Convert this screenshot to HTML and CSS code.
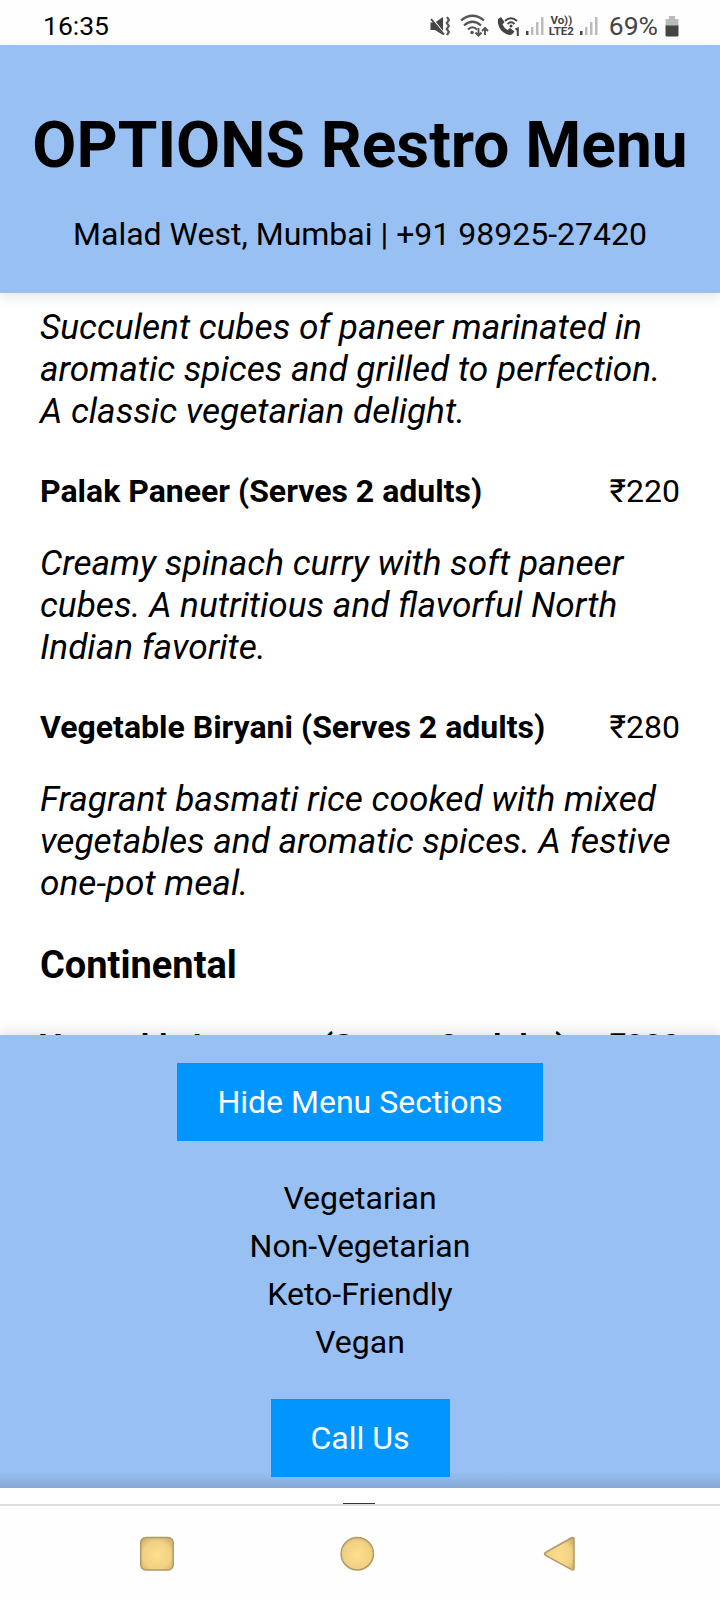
FILE: index.html
```html
<!DOCTYPE html>
<html lang="en">
<head>
    <meta charset="UTF-8">
    <meta name="viewport" content="width=device-width, initial-scale=1.0">
    <title>OPTIONS Restro Menu</title>
    <link rel="stylesheet" href="styles.css">
</head>
<body>
    <div class="status">
        <span class="time">16:35</span>
        <div class="status-icons">
            <svg class="mute" width="20" height="20" viewBox="0 0 20 20">
                <path d="M0.500 6.500h4.500L13 1v18l-8-5H.5z" fill="#444"/>
                <path d="M0 0l14 18" stroke="#fefefe" stroke-width="2.200"/>
                <path d="M1 3l13 15.500" stroke="#444" stroke-width="1.800"/>
                <path d="M17 1l1.800 3-2 3 2 3-2 3 2 3-1.800 3" fill="none" stroke="#555" stroke-width="2.200"/>
            </svg>
            <svg class="wifi" width="29" height="24" viewBox="0 0 29 24">
                <g fill="none" stroke="#555" stroke-width="2.200">
                    <path d="M1 6.500Q12.500-3 24 6.500"/>
                    <path d="M4 11.500Q12.500 4 21 11.500"/>
                    <path d="M8 15.500Q12.500 11 17 15.500"/>
                </g>
                <circle cx="12" cy="18.500" r="1.800" fill="#555"/>
                <path d="M18.500 14v7M15.500 18.500l3 3.200 3-3.200M25 21v-7M22 17l3-3.200 3 3.200" fill="none" stroke="#555" stroke-width="1.900"/>
            </svg>
            <svg class="call" width="23" height="22" viewBox="0 0 23 22">
                <path d="M1 3l3-2 3.500 5-2 2.500q1.500 3.500 5 5.500l2.500-2 4.500 3.500-2.500 3q-4 1.500-9-2.500-6-5-5-13z" fill="#444"/>
                <path d="M8 5Q14-.5 20 5M10.500 8Q14 4.500 17.500 8" fill="none" stroke="#444" stroke-width="1.900"/>
                <circle cx="14" cy="10" r="1.500" fill="#444"/>
                <path d="M18.500 13.500l2.300-1V20" fill="none" stroke="#444" stroke-width="2"/>
            </svg>
            <svg class="signal" width="18" height="20" viewBox="0 0 18 20">
                <path d="M0 15h2.500v4H0z" fill="#444"/>
                <path d="M5 11h2.500v8H5zM10 6h2.500v13H10zM15 1h2.500v18H15z" fill="#bbb"/>
            </svg>
            <div class="volte"><span>Vo))</span><span>LTE2</span></div>
            <svg class="signal2" width="18" height="20" viewBox="0 0 18 20">
                <path d="M0 15h2.500v4H0z" fill="#444"/>
                <path d="M5 11h2.500v8H5zM10 6h2.500v13H10zM15 1h2.500v18H15z" fill="#bbb"/>
            </svg>
            <span class="percent">69%</span>
            <svg class="battery" width="14" height="21" viewBox="0 0 14 21">
                <path d="M4 0h6v3h2.500q1 0 1 1v6H.5V4q0-1 1-1H4z" fill="#bbb"/>
                <path d="M.5 9.500h13v10q0 1-1 1h-11q-1 0-1-1z" fill="#444"/>
            </svg>
        </div>
    </div>

    <header class="header">
        <h1>OPTIONS Restro Menu</h1>
        <p>Malad West, Mumbai | +91 98925-27420</p>
    </header>

    <main class="menu">
        <p class="description">Succulent cubes of paneer marinated in<br>aromatic spices and grilled to perfection.<br>A classic vegetarian delight.</p>
        <div class="item">
            <span class="name">Palak Paneer (Serves 2 adults)</span>
            <span class="price">₹220</span>
        </div>
        <p class="description">Creamy spinach curry with soft paneer<br>cubes. A nutritious and flavorful North<br>Indian favorite.</p>
        <div class="item">
            <span class="name">Vegetable Biryani (Serves 2 adults)</span>
            <span class="price">₹280</span>
        </div>
        <p class="description">Fragrant basmati rice cooked with mixed<br>vegetables and aromatic spices. A festive<br>one-pot meal.</p>
        <h3>Continental</h3>
        <div class="item">
            <span class="name">Vegetable Lasagna (Serves 2 adults)</span>
            <span class="price">₹320</span>
        </div>
    </main>

    <footer class="footer">
        <button class="btn">Hide Menu Sections</button>
        <ul class="sections">
            <li>Vegetarian</li>
            <li>Non-Vegetarian</li>
            <li>Keto-Friendly</li>
            <li>Vegan</li>
        </ul>
        <button class="btn">Call Us</button>
    </footer>

    <div class="handle"><span></span></div>
    <div class="navbar">
        <svg width="440" height="40" viewBox="0 0 440 40">
            <defs>
                <radialGradient id="gold" cx="50%" cy="55%" r="70%">
                    <stop offset="0" stop-color="#fddf8d"/>
                    <stop offset="0.6" stop-color="#f1d184"/>
                    <stop offset="1" stop-color="#c4a969"/>
                </radialGradient>
            </defs>
            <g fill="url(#gold)" stroke="#b09b68" stroke-width="1.500">
                <rect x="3.700" y="3.500" width="32.500" height="32.500" rx="5"/>
                <circle cx="220.300" cy="19.700" r="16.200"/>
                <path d="M408.500 18.500L434.500 3.800Q437 2.800 437 5.300V34.300Q437 36.800 434.500 35.600L408.500 21.300Q406.500 19.800 408.500 18.500z"/>
            </g>
        </svg>
    </div>
</body>
</html>
```
FILE: styles.css
```css
* { box-sizing: border-box; }
body { margin: 0; height: 1600px; overflow: hidden; display: flex; flex-direction: column; background: #fff; color: #000; font-family: Roboto, "Liberation Sans", sans-serif; font-size: 32px; line-height: 36px; }
h1, h3, p, ul { margin: 0; padding: 0; }

.status { height: 45px; flex: none; display: flex; justify-content: space-between; padding: 8px 41px 0 43px; background: #fefefe; }
.time { font-size: 26.5px; }
.status-icons { display: flex; align-items: flex-start; padding-top: 8px; color: #444; }
.wifi { margin-left: 10px; margin-top: -2px; }
.call { margin-left: 8px; }
.signal { margin-left: 6px; }
.volte { width: 27px; margin: -1px 0 0 4px; display: flex; flex-direction: column; align-items: center; font-size: 11.5px; line-height: 11px; font-weight: bold; }
.signal2 { margin-left: 5px; }
.percent { margin: -8px 0 0 11px; font-size: 26.5px; }
.battery { margin-left: 7px; }

.header { height: 248px; flex: none; position: relative; padding-top: 63px; text-align: center; white-space: nowrap; background: #99c0f3; box-shadow: 0 4px 12px rgba(0, 0, 0, 0.1); }
.header h1 { font-size: 64px; line-height: 75px; }
.header p { margin-top: 33px; }

.menu { height: 742px; flex: none; overflow: hidden; padding: 13px 40px 0; white-space: nowrap; }
.description { font-size: 35.2px; line-height: 42px; font-style: italic; }
.item { display: flex; justify-content: space-between; margin: 41px 0 33px; }
.name { font-weight: bold; }
.menu h3 { font-size: 38px; line-height: 44px; margin: 39px 0 -1px; }

.footer { height: 453px; flex: none; position: relative; display: flex; flex-direction: column; align-items: center; padding-top: 28px; background: linear-gradient(#99c0f3 437px, #86a9d6); box-shadow: 0 -4px 12px rgba(0, 0, 0, 0.1); }
.btn { flex: none; height: 78px; padding: 0 40px; border: none; background: #0095ff; color: #fff; font-family: inherit; font-size: 32px; }
.sections { list-style: none; margin: 33px 0 33px; text-align: center; line-height: 48px; }

.handle { height: 18px; flex: none; position: relative; display: flex; justify-content: center; align-items: flex-end; background: #fff; border-bottom: 2px solid #dfdfdf; }
.handle span { width: 32px; height: 1px; margin-right: 2px; background: #333; }
.navbar { flex: 1; padding: 28px 0 0 137px; background: #fefefe; }
```
